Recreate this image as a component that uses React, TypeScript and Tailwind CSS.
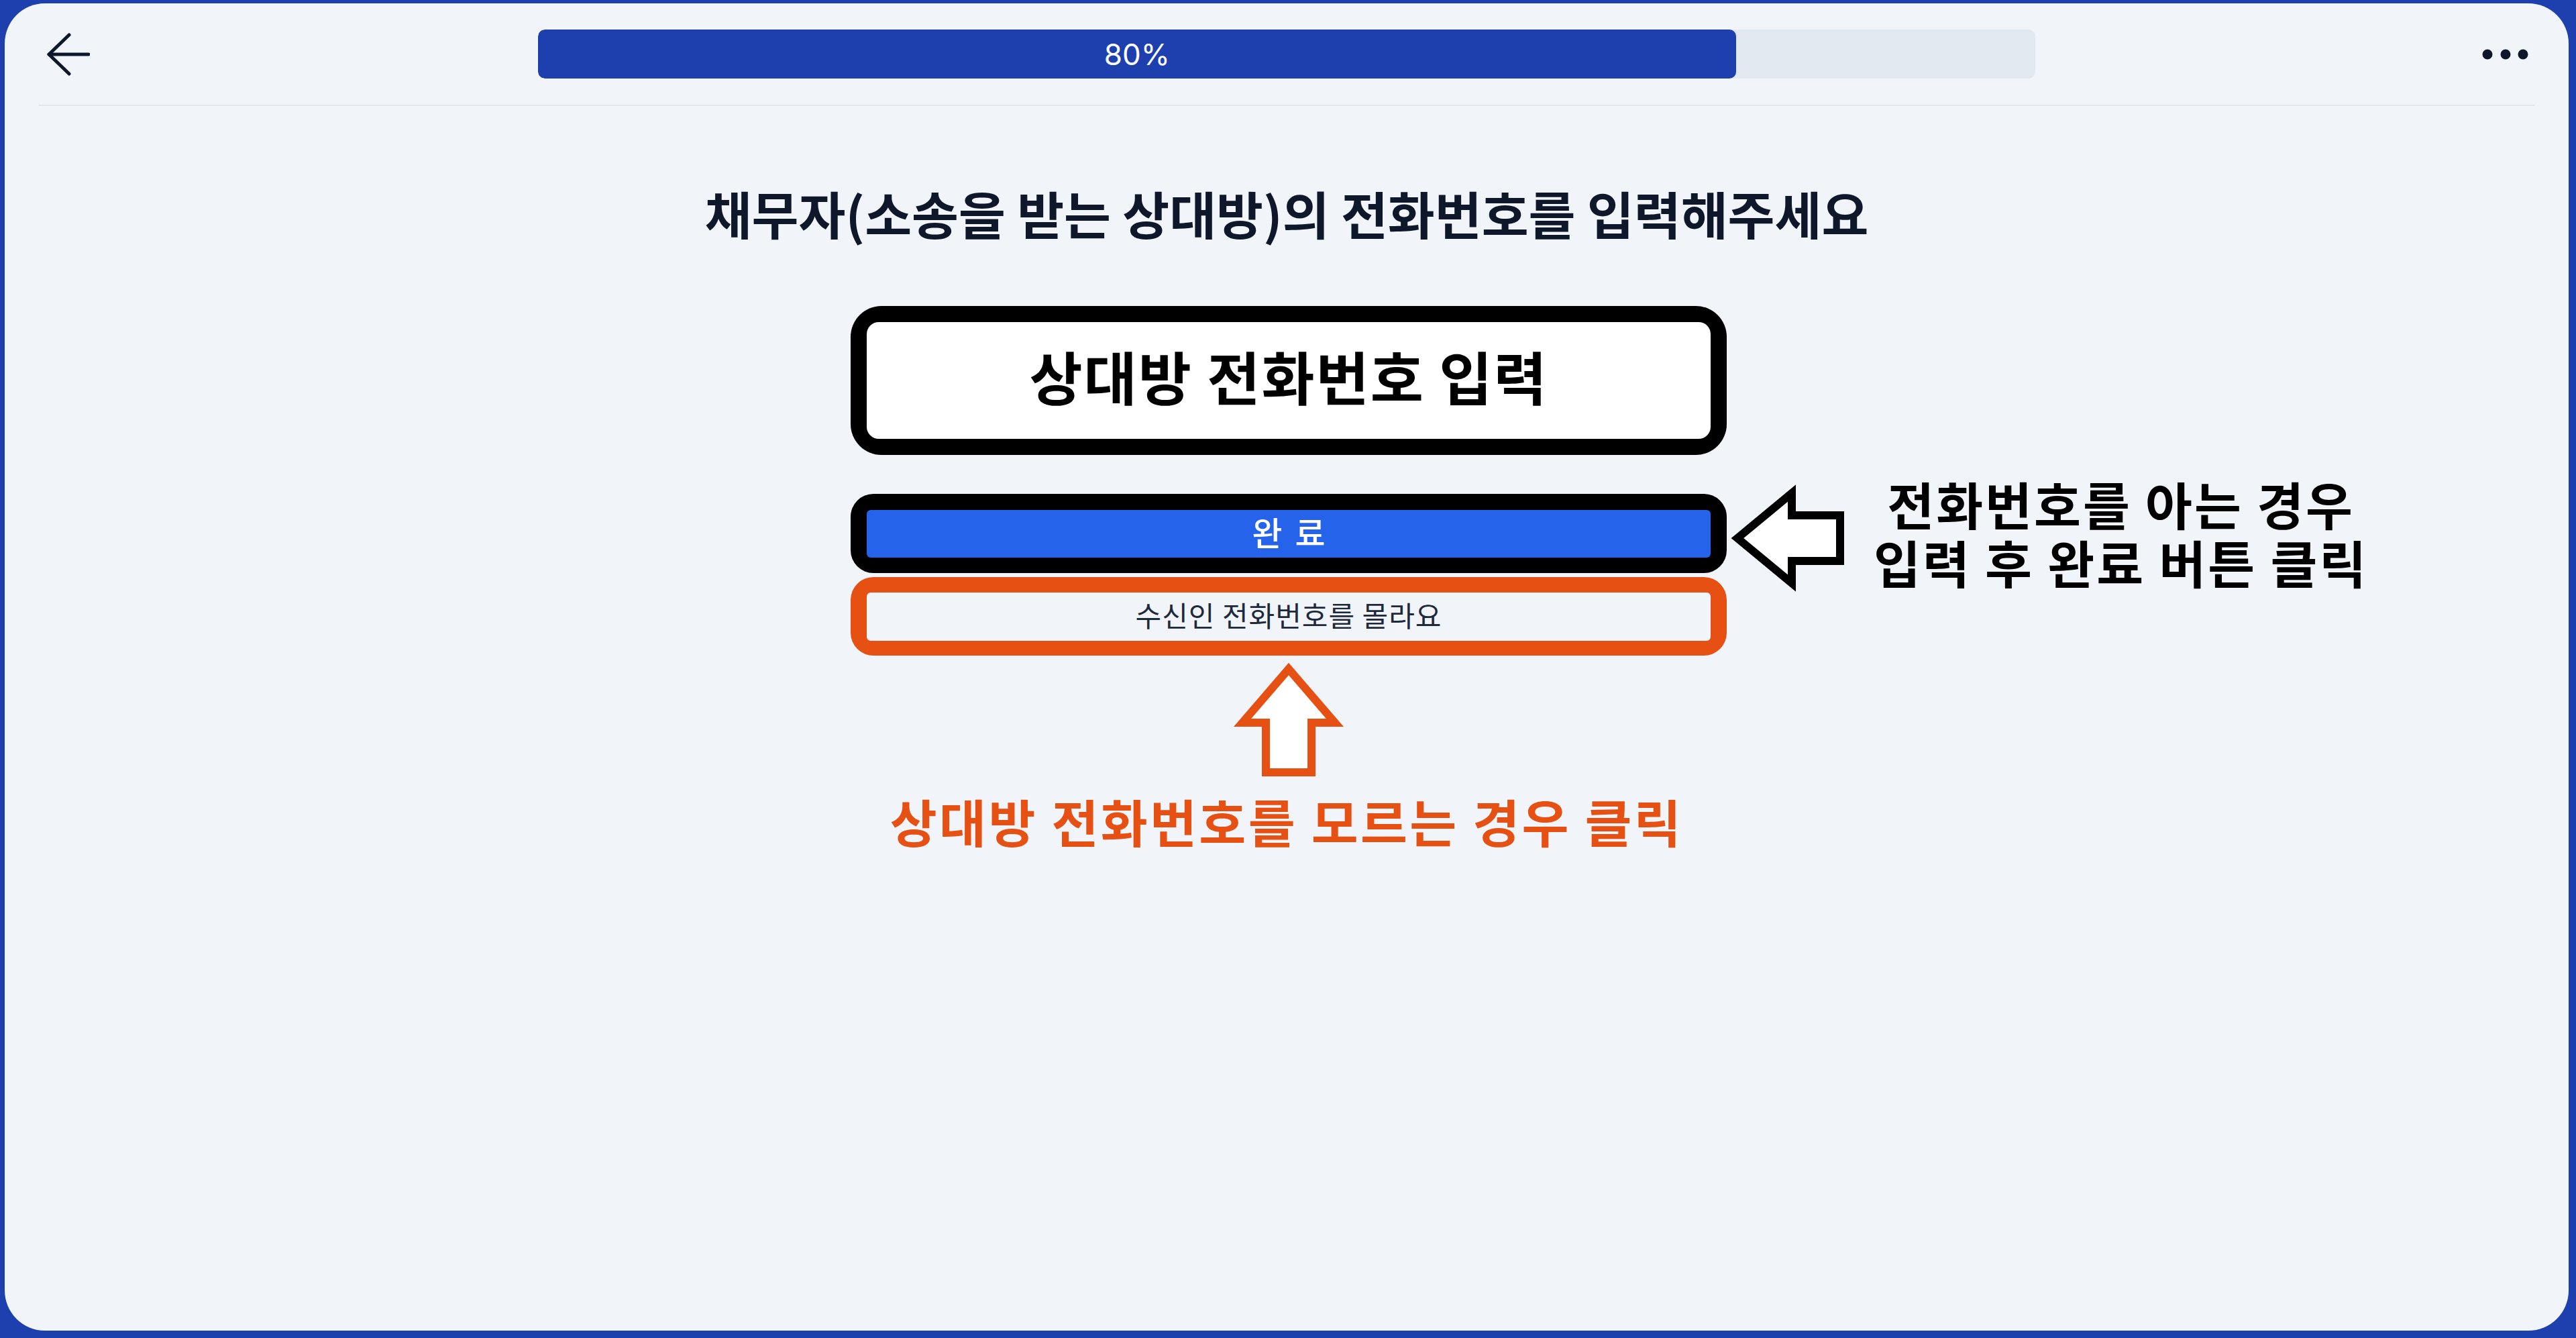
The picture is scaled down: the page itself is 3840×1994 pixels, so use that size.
import React from "react";

const KR = "font-['Noto_Sans_CJK_KR','Noto_Sans',sans-serif]";

function BackArrow() {
  return (
    <svg width="64" height="64" viewBox="0 0 64 64" fill="none" stroke="#0f172a" strokeWidth="5" strokeLinecap="round" strokeLinejoin="round">
      <path d="M33 3 L3 32 L33 61" />
      <path d="M3 32 H62" />
    </svg>
  );
}

function Dots() {
  return (
    <svg width="70" height="20" viewBox="0 0 70 20" fill="#0f172a">
      <circle cx="8" cy="10" r="7.5" />
      <circle cx="35" cy="10" r="7.5" />
      <circle cx="61" cy="10" r="7.5" />
    </svg>
  );
}

function LeftArrow() {
  return (
    <svg className="shrink-0" width="172" height="162" viewBox="0 0 172 162" fill="#ffffff" stroke="#000000" strokeWidth="12" strokeLinejoin="miter" strokeMiterlimit="10">
      <polygon points="11,80 92,13 92,46 164,46 164,114 92,114 92,147" />
    </svg>
  );
}

function UpArrow() {
  return (
    <svg width="164" height="174" viewBox="0 0 164 174" fill="#ffffff" stroke="#e65012" strokeWidth="12" strokeLinejoin="miter" strokeMiterlimit="10">
      <polygon points="82,13 151,93 116,93 116,167 48,167 48,93 13,93" />
    </svg>
  );
}

export default function App() {
  return (
    <div className={`h-screen w-full bg-[#1e40af] pt-[5px] pl-[7px] pr-[11px] pb-[11px] ${KR}`}>
      <div className="flex h-full flex-col rounded-[60px] bg-[#f1f5f9]">
        <header className="mx-[50px] grid h-[153px] grid-cols-[1fr_auto_1fr] items-center border-b-2 border-[#e2e8f0]">
          <div className="flex items-center pl-[13px]">
            <BackArrow />
          </div>
          <div className="h-[73px] w-[2232px] overflow-hidden rounded-[10px] bg-[#e2e8f0]">
            <div className="flex h-full w-[80%] items-center justify-center rounded-[10px] bg-[#1e40af] font-['Inter','Noto_Sans',sans-serif] text-[44px] leading-none text-white">
              80%
            </div>
          </div>
          <div className="flex items-center justify-end pr-[9px]">
            <Dots />
          </div>
        </header>

        <main className="flex flex-col items-center">
          <h1 className="mt-[121px] whitespace-nowrap text-[76px] font-bold leading-none tracking-[0px] text-[#0f172a]">
            채무자(소송을 받는 상대방)의 전화번호를 입력해주세요
          </h1>

          <div className="ml-[6px] mt-[101px] flex w-[1306px] flex-col">
            <div className="rounded-[46px] bg-black p-[24px]">
              <div className="flex h-[174px] items-center justify-center rounded-[18px] bg-white pb-[14px]">
                <span className="whitespace-nowrap text-[86px] font-bold leading-none tracking-[2px] text-black">
                  상대방 전화번호 입력
                </span>
              </div>
            </div>

            <div className="relative mt-[58px] rounded-[34px] bg-black px-[24px] pb-[23px] pt-[24px]">
              <div className="flex h-[71px] items-center justify-center rounded-[6px] bg-[#2563eb] pb-[8px]">
                <span className="whitespace-nowrap pl-[4px] text-[49px] font-medium leading-none tracking-[4px] text-white">완 료</span>
              </div>
              <div className="absolute left-full top-[-14px] ml-[5px] flex w-max items-start">
                <LeftArrow />
                <div className="ml-[42px] mt-[-10px] flex flex-col items-center gap-[11px] whitespace-nowrap text-[76px] font-bold leading-none tracking-[3px] text-black">
                  <div>전화번호를 아는 경우</div>
                  <div>입력 후 완료 버튼 클릭</div>
                </div>
              </div>
            </div>

            <div className="mt-[6px] rounded-[34px] bg-[#e65012] px-[24px] pb-[22px] pt-[23px]">
              <div className="flex h-[72px] items-center justify-center rounded-[6px] bg-[#f1f5f9] pb-[6px]">
                <span className="whitespace-nowrap text-[42px] font-normal leading-none tracking-[1px] text-[#1e293b]">수신인 전화번호를 몰라요</span>
              </div>
            </div>
          </div>

          <div className="mt-[7px] flex flex-col items-center">
            <div className="ml-[6px]">
              <UpArrow />
            </div>
            <p className="mt-[27px] whitespace-nowrap text-[76px] font-bold leading-none tracking-[3.4px] text-[#e65012]">
              상대방 전화번호를 모르는 경우 클릭
            </p>
          </div>
        </main>
      </div>
    </div>
  );
}
